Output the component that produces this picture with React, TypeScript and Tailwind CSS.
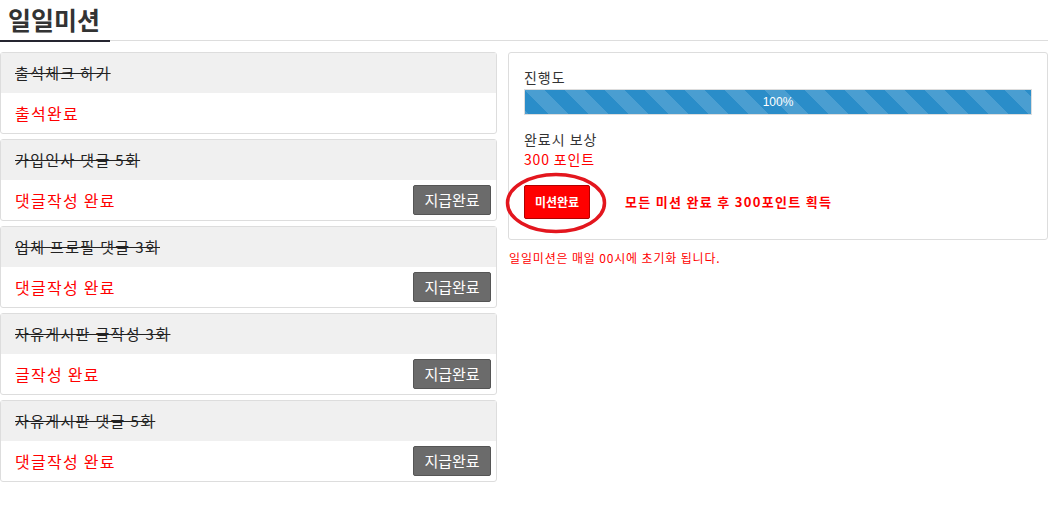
import React from "react";

const missions = [
  { title: "출석체크 하기", status: "출석완료", paid: false },
  { title: "가입인사 댓글 5회", status: "댓글작성 완료", paid: true },
  { title: "업체 프로필 댓글 3회", status: "댓글작성 완료", paid: true },
  { title: "자유게시판 글작성 3회", status: "글작성 완료", paid: true },
  { title: "자유게시판 댓글 5회", status: "댓글작성 완료", paid: true },
];

const font = "font-['Malgun_Gothic','Noto_Sans_CJK_KR',sans-serif]";

const MissionCard = ({ title, status, paid }: { title: string; status: string; paid: boolean }) => (
  <div className="mb-[5px] rounded-[3px] border border-[#dddddd] bg-white">
    <div className="flex h-[40px] items-center bg-[#f0f0f0] px-[14px] text-[15px] tracking-[0.09em] text-[#222222] line-through">
      {title}
    </div>
    <div className="flex h-[40px] items-center justify-between pl-[14px] pr-[5px]">
      <span className="text-[16px] tracking-[0.08em] text-[#ff0000]">{status}</span>
      {paid ? (
        <button className="h-[30px] w-[78px] rounded-[2px] border border-[#555555] bg-[#6b6b6b] text-[15px] tracking-normal text-white">
          지급완료
        </button>
      ) : null}
    </div>
  </div>
);

export default function App() {
  const progress = 100;
  return (
    <div className={`${font} w-[1048px] bg-white text-[#333333]`}>
      {/* title */}
      <div className="relative h-[41px] border-b border-[#dddddd]">
        <h1 className="absolute left-0 top-0 h-[42px] w-[110px] border-b-2 border-[#252530] pl-[8px] pt-[1px] text-[25px] font-semibold leading-[36px] text-[#333333]">
          일일미션
        </h1>
      </div>

      <div className="mt-[11px] flex items-start">
        {/* mission list */}
        <div className="w-[497px]">
          {missions.map((m) => (
            <MissionCard key={m.title} {...m} />
          ))}
        </div>

        {/* summary */}
        <div className="ml-[11px] w-[540px]">
          <div className="relative rounded-[3px] border border-[#dddddd] px-[15px] pb-[20px] pt-[14px]">
            <div className="text-[14px] leading-[20px] tracking-[0.07em]">진행도</div>
            <div className="mt-[2px] h-[26px] w-full border border-[#dddddd] bg-[#eeeeee]">
              <div
                className="flex h-full items-center justify-center bg-[#2a8dc9] bg-[linear-gradient(45deg,rgba(255,255,255,.15)_25%,transparent_25%,transparent_50%,rgba(255,255,255,.15)_50%,rgba(255,255,255,.15)_75%,transparent_75%,transparent)] bg-[length:40px_40px] font-['Liberation_Sans',sans-serif] text-[12px] text-white"
                style={{ width: `${progress}%` }}
              >
                {progress}%
              </div>
            </div>
            <div className="mt-[14px] text-[14px] leading-[20px] tracking-[0.07em]">완료시 보상</div>
            <div className="text-[14px] leading-[20px] tracking-[0.06em] text-[#ff0000]">300 포인트</div>
            <div className="mt-[16px] flex items-center">
              <div className="relative">
                <button className="h-[34px] w-[66px] rounded-[2px] border border-[#b00000] bg-[#ff0000] text-[12px] font-semibold text-white">
                  미션완료
                </button>
                <svg
                  className="pointer-events-none absolute left-[-19px] top-[-13px]"
                  width="102"
                  height="62"
                  viewBox="0 0 102 62"
                >
                  <ellipse cx="51" cy="31" rx="48.5" ry="28.5" fill="none" stroke="#e3161e" strokeWidth="3.5" />
                </svg>
              </div>
              <span className="ml-[35px] text-[13px] font-semibold tracking-[0.1em] text-[#ff0000]">모든 미션 완료 후 300포인트 획득</span>
            </div>
          </div>
          <p className="mt-[9px] pl-[1px] text-[12px] tracking-[0.07em] text-[#ff0000]">일일미션은 매일 00시에 초기화 됩니다.</p>
        </div>
      </div>
    </div>
  );
}
